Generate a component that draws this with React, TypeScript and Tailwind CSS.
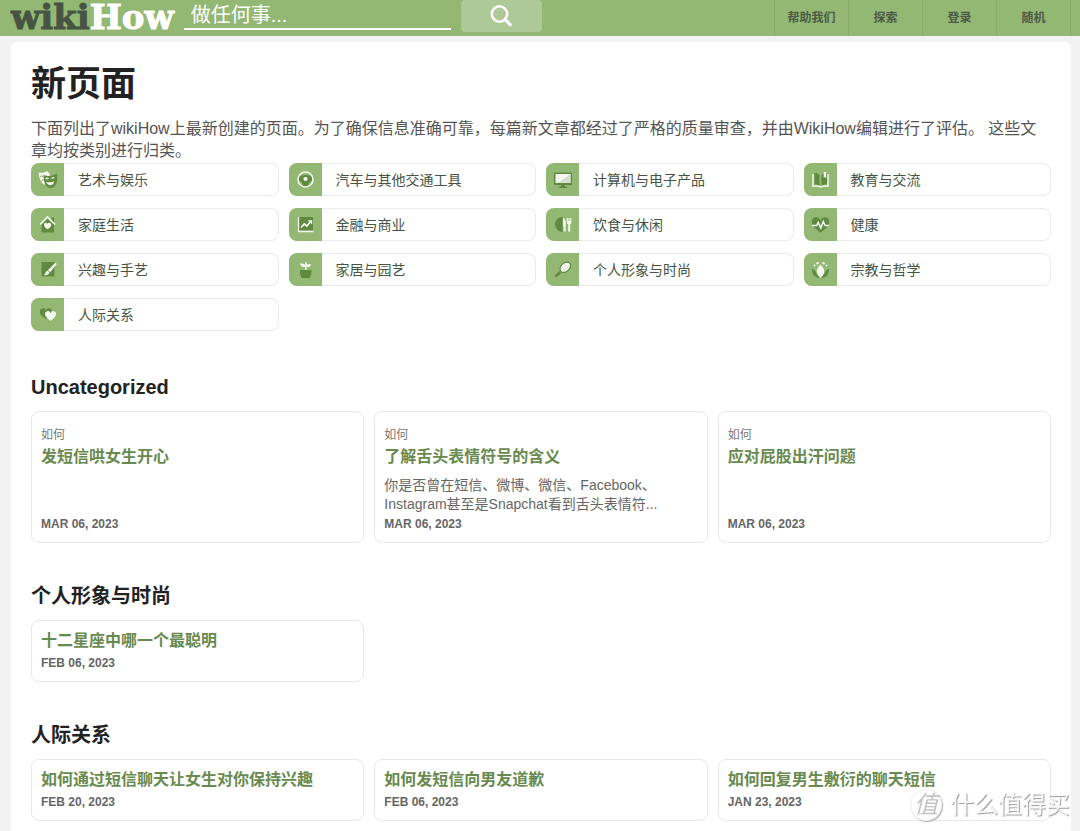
import React from 'react';

const DARK = '#5f8a3f';
const LIGHT = '#f3f8ee';
const HEART = 'M12 21.500C6 17 1.500 13.500 1.500 8.500a5.300 5.300 0 0 1 10.500-2 5.300 5.300 0 0 1 10.500 2c0 5-4.500 8.500-10.500 13z';

// every category icon is drawn on the same 33 unit tile
const ICONS: Record<string, React.ReactNode> = {
  masks: (
    <>
      <path d="M7.500 9.500c3 .8 5.500 .3 8.500-1.500l3 3L17 22c-5 .5-8.500-3-9.500-12.500z" fill={LIGHT} />
      <path d="M9.500 13.500q1.200-1 2.300 0M10.500 18q.8-1.200 2-1" fill="none" stroke={DARK} strokeWidth="1" />
      <path d="M12.500 12c4.500 1.500 9 1.300 13.500-1.500 1 8-1 14-6 14.500-5 0-7.500-5-7.500-13z" fill={DARK} />
      <path d="M14.500 16q1.500-1.500 3 0M20.500 15.500q1.500-1.500 3-.5" fill="none" stroke={LIGHT} strokeWidth="1.200" />
      <path d="M15.200 18.700q4.300 1.300 8-.5c-.5 2.800-2 4-3.800 4s-3.700-1.200-4.200-3.500z" fill={LIGHT} />
    </>
  ),
  wheel: (
    <>
      <path d="M9 14q7.500-4 15 0l-.5 3.500c-2.500 0-4 2-4.500 6h-5c-.5-4-2-6-4.500-6z" fill={DARK} />
      <circle cx="16.500" cy="16.500" r="7.500" fill="none" stroke={LIGHT} strokeWidth="1.600" />
      <circle cx="16.500" cy="16" r="2.100" fill={LIGHT} />
    </>
  ),
  monitor: (
    <>
      <rect x="8" y="9.500" width="18" height="12.500" rx="1" fill={DARK} />
      <rect x="9.500" y="11" width="15" height="9" fill={LIGHT} />
      <path d="M24.500 11v9h-13z" fill="#d6dfcf" />
      <path d="M15 22h4v1.500h2V25h-8v-1.500h2z" fill={DARK} />
    </>
  ),
  book: (
    <>
      <path d="M10.500 10q3-.5 5 2v11q-2-2-5-1.700zM23 10q-3-.5-5.500 2v11q2.500-2 5.500-1.700z" fill={DARK} />
      <path d="M9 11v12.200c3-.6 5.500-.4 7.500.8 2-1.200 4.500-1.400 7.500-.8V11" fill="none" stroke={LIGHT} strokeWidth="1.500" />
      <path d="M19.700 9h2.500v6l-1.300-1-1.200 1z" fill={LIGHT} />
    </>
  ),
  house: (
    <>
      <path d="M20.500 9.500H23v5h-2.500zM10.500 16.500l6-5.500 6.500 5.500v8H10.500z" fill={DARK} />
      <path d="M9 16.500l7.500-7.500 7.500 7.500" fill="none" stroke={LIGHT} strokeWidth="1.600" />
      <path d={HEART} transform="translate(12.500 14) scale(.34)" fill={LIGHT} />
    </>
  ),
  chart: (
    <>
      <rect x="10" y="9" width="14" height="13.500" fill={DARK} />
      <path d="M9.500 9v14.500H24.500" fill="none" stroke={LIGHT} strokeWidth="1.300" />
      <path d="M12 19.500l3.300-3.500 2.500 2 3.500-4" fill="none" stroke={LIGHT} strokeWidth="1.700" />
      <path d="M18.800 12.200h4.400v4.400z" fill={LIGHT} />
    </>
  ),
  food: (
    <>
      <path d="M16.500 9v15a7.500 7.500 0 1 1 0-15z" fill={DARK} />
      <path d="M17 10c2.300.5 3.300 3 2.800 7l-.3 6.500h-1.900V18H17z" fill={LIGHT} />
      <path d="M20.800 10h1.100v3h.6v-3h1.100v3h.6v-3h1.100v4.500c0 1-.7 1.500-1.200 1.800l.2 7.200h-2.200l.2-7.200c-.8-.4-1.500-1-1.500-2z" fill={LIGHT} />
    </>
  ),
  health: (
    <>
      <path d={HEART} transform="translate(6.700 7.500) scale(.82 .8)" fill={DARK} />
      <path d="M8 17.500h4.500l1.700-3 2.600 5.500 2.500-6.500 1.800 4H25" fill="none" stroke={LIGHT} strokeWidth="1.500" />
    </>
  ),
  brush: (
    <>
      <rect x="10.500" y="9" width="13" height="14.500" fill={DARK} />
      <path d="M24.300 9.800l1.400 1.300-6.500 8.200-2.400-2.100z" fill={LIGHT} />
      <path d="M16.300 17.500l2.300 2.200c-1 2.200-3.100 2.500-5.600 2.500 1.500-1 1.300-3.700 3.300-4.700z" fill={LIGHT} />
    </>
  ),
  plant: (
    <>
      <path d="M11 17h11.500v3l-1.500 5h-8.500L11 20z" fill={DARK} />
      <path d="M16 17v-3c-2.500.3-4.500-.7-5-3.500 2.500-.3 4 .2 5 1.500-.2-1.500.2-2.700 1-3.500.9 1 1.100 2.200.8 3.500 1-.9 2.500-1.200 4.200-.8-.5 2.300-2 3.300-4.500 2.800v3z" fill={LIGHT} />
    </>
  ),
  racket: (
    <>
      <path d="M9.500 23.500l5-4.500" stroke={DARK} strokeWidth="2.600" />
      <ellipse cx="19.300" cy="14.300" rx="6" ry="4.300" transform="rotate(-42 19.300 14.300)" fill={LIGHT} stroke={DARK} strokeWidth="1.200" />
      <path d="M16 14l5 4M18.500 11.500l4.500 4M16 17.500l5-6.500M18.800 18.500l4.200-5.500" stroke="#d3dfc9" strokeWidth=".5" />
    </>
  ),
  lotus: (
    <>
      <path d="M8 16c2.500.3 3.500 2 4.500 4.500L16.500 25c-5.500 0-8.500-3-8.500-9zM25 16c-2.500.3-3.500 2-4.500 4.500L16.500 25c5.500 0 8.500-3 8.500-9z" fill={DARK} />
      <path d="M16.500 11.500c4.800 4.500 5 9 0 13.500-5-4.500-4.800-9 0-13.500z" fill={LIGHT} />
      <circle cx="10.500" cy="12.500" r="1" fill={LIGHT} />
      <circle cx="13.500" cy="10.300" r="1.200" fill={LIGHT} />
      <circle cx="19.500" cy="10.300" r="1.200" fill={LIGHT} />
      <circle cx="22.500" cy="12.500" r="1" fill={LIGHT} />
    </>
  ),
  hearts: (
    <>
      <path d={HEART} transform="translate(8 9.200) scale(.58 .55)" fill={DARK} />
      <path d={HEART} transform="translate(13.300 12) scale(.52 .5)" fill={LIGHT} />
    </>
  ),
};

const CATEGORIES = [
  { icon: 'masks', name: '艺术与娱乐' },
  { icon: 'wheel', name: '汽车与其他交通工具' },
  { icon: 'monitor', name: '计算机与电子产品' },
  { icon: 'book', name: '教育与交流' },
  { icon: 'house', name: '家庭生活' },
  { icon: 'chart', name: '金融与商业' },
  { icon: 'food', name: '饮食与休闲' },
  { icon: 'health', name: '健康' },
  { icon: 'brush', name: '兴趣与手艺' },
  { icon: 'plant', name: '家居与园艺' },
  { icon: 'racket', name: '个人形象与时尚' },
  { icon: 'lotus', name: '宗教与哲学' },
  { icon: 'hearts', name: '人际关系' },
];

interface Article {
  title: string;
  date: string;
  prefix?: string;
  summary?: string;
}

const SECTIONS: { title: string; articles: Article[] }[] = [
  {
    title: 'Uncategorized',
    articles: [
      { prefix: '如何', title: '发短信哄女生开心', date: 'MAR 06, 2023' },
      {
        prefix: '如何',
        title: '了解舌头表情符号的含义',
        summary: '你是否曾在短信、微博、微信、Facebook、Instagram甚至是Snapchat看到舌头表情符...',
        date: 'MAR 06, 2023',
      },
      { prefix: '如何', title: '应对屁股出汗问题', date: 'MAR 06, 2023' },
    ],
  },
  {
    title: '个人形象与时尚',
    articles: [{ title: '十二星座中哪一个最聪明', date: 'FEB 06, 2023' }],
  },
  {
    title: '人际关系',
    articles: [
      { title: '如何通过短信聊天让女生对你保持兴趣', date: 'FEB 20, 2023' },
      { title: '如何发短信向男友道歉', date: 'FEB 06, 2023' },
      { title: '如何回复男生敷衍的聊天短信', date: 'JAN 23, 2023' },
    ],
  },
];

const NAV = ['帮助我们', '探索', '登录', '随机'];

const Header: React.FC = () => (
  <header className="flex h-9 items-start bg-[#93b874] pr-[9px] pl-[11px]">
    <a
      href="#"
      className="font-['DejaVu_Serif',serif] text-[34px] leading-[34px] font-bold text-[#475443] [-webkit-text-stroke:1px_currentColor]"
    >
      wiki<span className="text-white">How</span>
    </a>
    <form className="ml-2.5 flex" onSubmit={(e) => e.preventDefault()}>
      <input
        type="text"
        aria-label="搜索"
        placeholder="做任何事..."
        className="h-[30px] w-[267px] border-b-2 border-white bg-transparent px-[7px] pt-[3px] text-xl leading-6 text-white outline-none placeholder:text-white"
      />
      <button type="submit" aria-label="搜索" className="ml-2.5 flex h-8 w-[81px] items-center justify-center rounded bg-[#adc997]">
        <svg className="size-6" viewBox="0 0 24 24" fill="none" stroke="white" strokeLinecap="round">
          <circle cx="10.500" cy="10" r="7.700" strokeWidth="2.600" />
          <path d="M16.200 15.700l5 5" strokeWidth="3.200" />
        </svg>
      </button>
    </form>
    <nav className="ml-auto flex h-full border-r border-[#88ad69]">
      {NAV.map((item) => (
        <a key={item} href="#" className="flex w-[74px] items-center justify-center border-l border-[#88ad69] text-xs font-bold text-[#4c5a46]">
          {item}
        </a>
      ))}
    </nav>
  </header>
);

const ArticleCard: React.FC<{ article: Article }> = ({ article }) => (
  <a href="#" className="flex flex-col rounded-lg border border-[#e8e8e8] px-[9px] py-2">
    {article.prefix && <span className="mt-1.5 text-xs leading-[19px] text-[#777]">{article.prefix}</span>}
    <h3 className="text-base leading-6 font-bold text-[#688a4f]">{article.title}</h3>
    {article.summary && <p className="mt-[7px] text-sm leading-[19px] text-[#666]">{article.summary}</p>}
    <span className="mt-auto text-xs leading-5 font-bold text-[#666]">{article.date}</span>
  </a>
);

const Watermark: React.FC = () => (
  <div className="pointer-events-none fixed right-2.5 bottom-2 flex items-center gap-2 text-[#fafafa] [text-shadow:1px_1px_1px_#999]">
    <span className="flex size-8 items-center justify-center rounded-full border border-[#eee] bg-white/70 text-2xl leading-7 text-[#c4c4c4] shadow-[1px_1px_1px_#aaa] italic [text-shadow:none]">
      值
    </span>
    <span className="text-2xl leading-9">什么值得买</span>
  </div>
);

const App: React.FC = () => {
  return (
    <div lang="zh-CN" className="flex min-h-screen flex-col bg-[#f2f2f2] font-['Liberation_Sans','Noto_Sans_CJK_SC',sans-serif]">
      <Header />
      <main className="mt-1.5 mr-[9px] ml-[11px] grow rounded-t-md bg-white px-5 pt-5 pb-2.5">
        <h1 className="text-[35px] leading-[44px] font-bold text-[#222]">新页面</h1>
        <p className="mt-3 pr-2 text-base leading-[22px] text-[#545454]">
          下面列出了wikiHow上最新创建的页面。为了确保信息准确可靠，每篇新文章都经过了严格的质量审查，并由WikiHow编辑进行了评估。 这些文章均按类别进行归类。
        </p>
        <ul className="mt-px grid grid-cols-4 gap-x-2.5 gap-y-3">
          {CATEGORIES.map((category) => (
            <li key={category.name}>
              <a href="#" className="flex h-[33px] items-center overflow-hidden rounded-lg text-sm text-[#475443] shadow-[inset_0_0_0_1px_#ebebeb]">
                <svg className="size-[33px] shrink-0 bg-[#93b874]" viewBox="0 0 33 33">
                  {ICONS[category.icon]}
                </svg>
                <span className="ml-3.5">{category.name}</span>
              </a>
            </li>
          ))}
        </ul>
        <div className="mt-10 flex flex-col gap-[37px]">
          {SECTIONS.map((section) => (
            <section key={section.title}>
              <h2 className="text-xl leading-8 font-bold text-[#222]">{section.title}</h2>
              <div className="mt-2 grid grid-cols-3 gap-2.5">
                {section.articles.map((article) => (
                  <ArticleCard key={article.title} article={article} />
                ))}
              </div>
            </section>
          ))}
        </div>
      </main>
      <Watermark />
    </div>
  );
};

export default App;
